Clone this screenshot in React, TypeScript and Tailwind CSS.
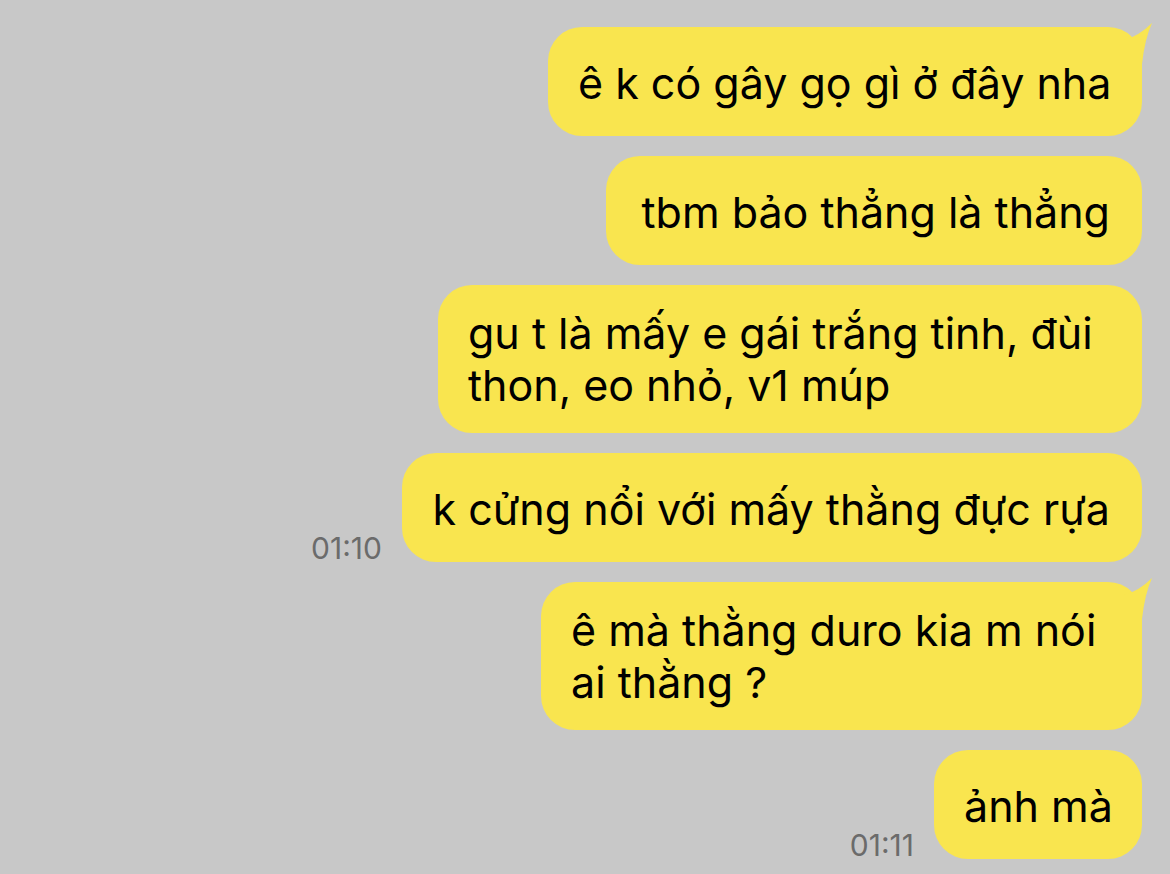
import React from "react";

type Msg = {
	lines: string[];
	tail?: boolean;
	time?: string;
	w: string;
};

const messages: Msg[] = [
	{lines: ["ê k có gây gọ gì ở đây nha"], tail: true, w: "w-[594px]"},
	{lines: ["tbm bảo thẳng là thẳng"], w: "w-[536px]"},
	{lines: ["gu t là mấy e gái trắng tinh, đùi", "thon, eo nhỏ, v1 múp"], w: "w-[704px]"},
	{lines: ["k cửng nổi với mấy thằng đực rựa"], time: "01:10", w: "w-[740px]"},
	{lines: ["ê mà thằng duro kia m nói", "ai thằng ?"], tail: true, w: "w-[601px]"},
	{lines: ["ảnh mà"], time: "01:11", w: "w-[208px]"},
];

function Tail() {
	return (
		<svg className="absolute -right-[12px] -top-[5px]" width="40" height="50" viewBox="0 0 40 50">
			<path d="M10 18 Q25 14 38 1 Q31 16 28 42 L10 42 Z" fill="#f9e54f" />
		</svg>
	);
}

export default function App() {
	return (
		<div
			className="w-[1170px] h-[874px] overflow-hidden bg-[#c8c8c8] flex flex-col items-end gap-[20px] pt-[27px] pr-[28px]"
			style={{fontFamily: "Inter, 'Noto Sans', sans-serif"}}
		>
			{messages.map((m, i) => {
				const multi = m.lines.length > 1;
				return (
					<div key={i} className="flex items-end gap-[20px]">
						{m.time && (
							<span className="text-[30px] leading-[34px] text-[#6b6b6b] -mb-[3px]">{m.time}</span>
						)}
						<div
							className={`relative ${m.w} rounded-[34px] bg-[#f9e54f] text-black text-[43px] leading-[52px] pl-[30px] pr-[32px] whitespace-nowrap ${
								multi ? "py-[22px]" : "pt-[30px] pb-[27px]"
							}`}
						>
							{m.tail && <Tail />}
							{m.lines.map((l, j) => (
								<div key={j} className={multi ? "" : "text-right"}>{l}</div>
							))}
						</div>
					</div>
				);
			})}
		</div>
	);
}
